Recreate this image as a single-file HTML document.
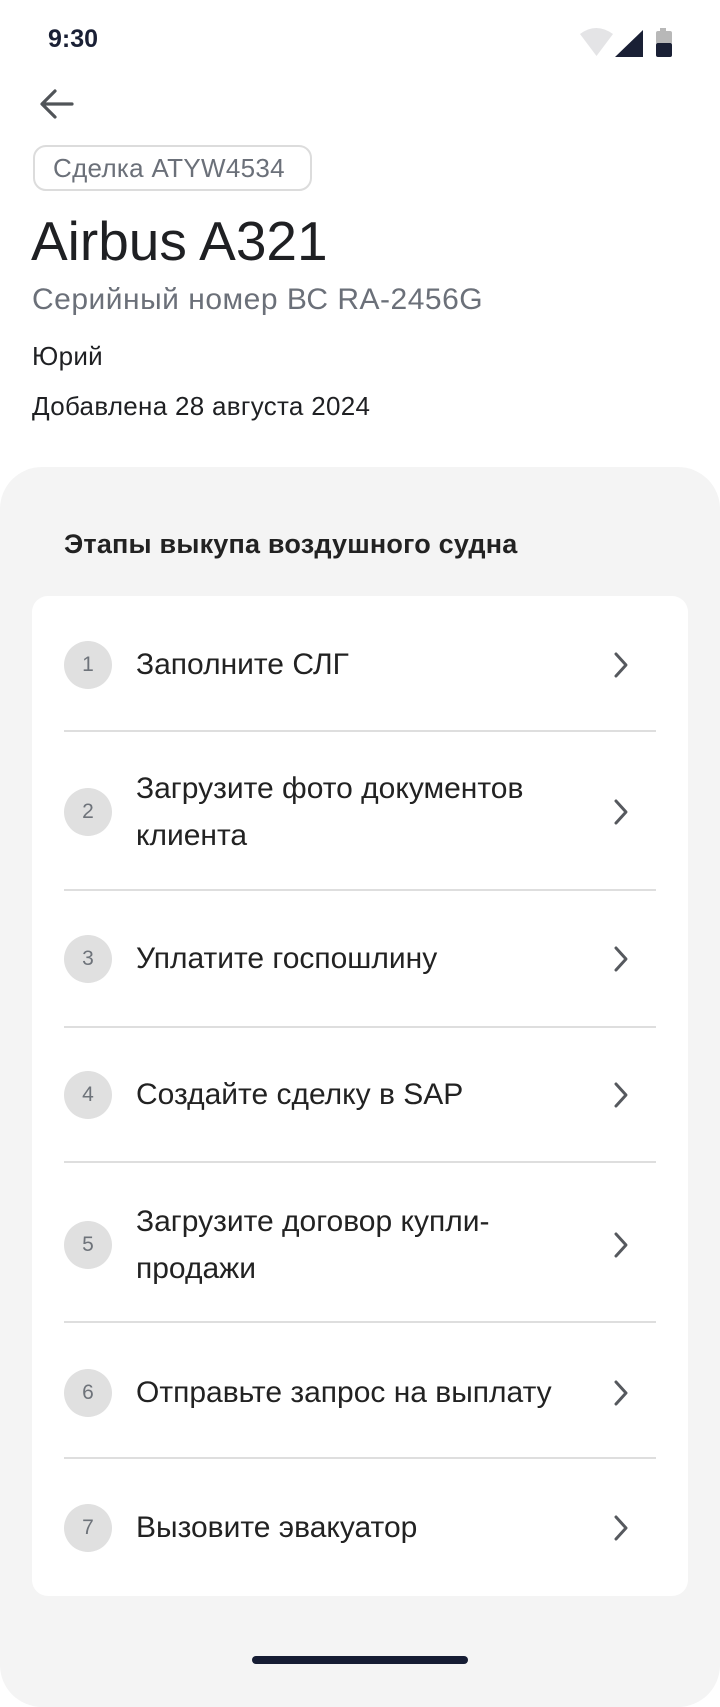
<!DOCTYPE html>
<html><head><meta charset="utf-8"><style>
*{margin:0;padding:0;box-sizing:border-box}
body{width:720px;height:1684px;background:#fff;position:relative;overflow:hidden;font-family:"Liberation Sans","Noto Sans CJK SC",sans-serif;color:#1f2023}
.a{position:absolute;white-space:nowrap}
.sheet{position:absolute;left:0;top:467px;width:720px;height:1240px;background:#f4f4f4;border-radius:42px}
.card{position:absolute;left:32px;top:596px;width:656px;height:1000px;background:#fff;border-radius:16px}
.div{position:absolute;left:64px;width:592px;height:2px;background:#dedede}
.c{position:absolute;left:64px;width:48px;height:48px;border-radius:50%;background:#e0e0e0;color:#6e737a;font-size:21px;text-align:center;line-height:48px}
.t{position:absolute;left:136px;font-size:30px;line-height:47px;color:#222}
.ch{position:absolute;left:608px;width:24px;height:28px}
</style></head><body>
<div class="a" style="left:48px;top:25px;font-size:25px;font-weight:bold;color:#1a2035">9:30</div>
<svg class="a" style="left:578px;top:26px" width="100" height="34" viewBox="0 0 100 34">
<path d="M2 8 Q18 -4 35 8 L18.5 30 Z" fill="#e4e4e6"/>
<path d="M37 31 L65 4 L65 31 Z" fill="#1a2035"/>
<rect x="82" y="2" width="6" height="4" fill="#b8b8b8"/>
<rect x="78" y="5" width="16" height="13" rx="2" fill="#b8b8b8"/>
<rect x="78" y="17" width="16" height="14" rx="2" fill="#1a2035"/>
</svg>
<svg class="a" style="left:38px;top:87px" width="38" height="34" viewBox="0 0 38 34">
<path d="M34 17 H5 M17 4 L4 17 L17 30" fill="none" stroke="#505458" stroke-width="3.2" stroke-linecap="round" stroke-linejoin="round"/>
</svg>
<div class="a" style="left:33px;top:145px;width:279px;height:46px;border:2px solid #dcdcdc;border-radius:13px;font-size:26px;letter-spacing:0.3px;color:#6b7079;line-height:42px;padding-left:18px">Сделка ATYW4534</div>
<div class="a" style="left:31px;top:210px;font-size:55px;line-height:62px;color:#1f2023">Airbus A321</div>
<div class="a" style="left:32px;top:283px;font-size:30px;letter-spacing:0.5px;line-height:34px;color:#6b7079">Серийный номер ВС RA-2456G</div>
<div class="a" style="left:32px;top:341px;font-size:26px;letter-spacing:0.3px;line-height:30px">Юрий</div>
<div class="a" style="left:32px;top:391px;font-size:26px;letter-spacing:0.3px;line-height:30px">Добавлена 28 августа 2024</div>
<div class="sheet"></div>
<div class="a" style="left:64px;top:528px;font-size:27px;font-weight:bold;letter-spacing:0.2px;line-height:32px;color:#222">Этапы выкупа воздушного судна</div>
<div class="card"></div>

<div class="c" style="top:641px">1</div><div class="t" style="top:641px">Заполните СЛГ</div>
<div class="div" style="top:730px"></div>
<div class="c" style="top:788px">2</div><div class="t" style="top:765px">Загрузите фото документов<br>клиента</div>
<div class="div" style="top:889px"></div>
<div class="c" style="top:935px">3</div><div class="t" style="top:935px">Уплатите госпошлину</div>
<div class="div" style="top:1026px"></div>
<div class="c" style="top:1071px">4</div><div class="t" style="top:1071px">Создайте сделку в SAP</div>
<div class="div" style="top:1161px"></div>
<div class="c" style="top:1221px">5</div><div class="t" style="top:1198px">Загрузите договор купли-<br>продажи</div>
<div class="div" style="top:1321px"></div>
<div class="c" style="top:1369px">6</div><div class="t" style="top:1369px">Отправьте запрос на выплату</div>
<div class="div" style="top:1457px"></div>
<div class="c" style="top:1504px">7</div><div class="t" style="top:1504px">Вызовите эвакуатор</div>

<svg class="ch" style="top:651px" viewBox="0 0 24 28"><path d="M8 3 L18 14 L8 25" fill="none" stroke="#56595e" stroke-width="3" stroke-linecap="round" stroke-linejoin="round"/></svg>
<svg class="ch" style="top:798px" viewBox="0 0 24 28"><path d="M8 3 L18 14 L8 25" fill="none" stroke="#56595e" stroke-width="3" stroke-linecap="round" stroke-linejoin="round"/></svg>
<svg class="ch" style="top:945px" viewBox="0 0 24 28"><path d="M8 3 L18 14 L8 25" fill="none" stroke="#56595e" stroke-width="3" stroke-linecap="round" stroke-linejoin="round"/></svg>
<svg class="ch" style="top:1081px" viewBox="0 0 24 28"><path d="M8 3 L18 14 L8 25" fill="none" stroke="#56595e" stroke-width="3" stroke-linecap="round" stroke-linejoin="round"/></svg>
<svg class="ch" style="top:1231px" viewBox="0 0 24 28"><path d="M8 3 L18 14 L8 25" fill="none" stroke="#56595e" stroke-width="3" stroke-linecap="round" stroke-linejoin="round"/></svg>
<svg class="ch" style="top:1379px" viewBox="0 0 24 28"><path d="M8 3 L18 14 L8 25" fill="none" stroke="#56595e" stroke-width="3" stroke-linecap="round" stroke-linejoin="round"/></svg>
<svg class="ch" style="top:1514px" viewBox="0 0 24 28"><path d="M8 3 L18 14 L8 25" fill="none" stroke="#56595e" stroke-width="3" stroke-linecap="round" stroke-linejoin="round"/></svg>

<div class="a" style="left:252px;top:1656px;width:216px;height:8px;border-radius:4px;background:#151c33"></div>
</body></html>
